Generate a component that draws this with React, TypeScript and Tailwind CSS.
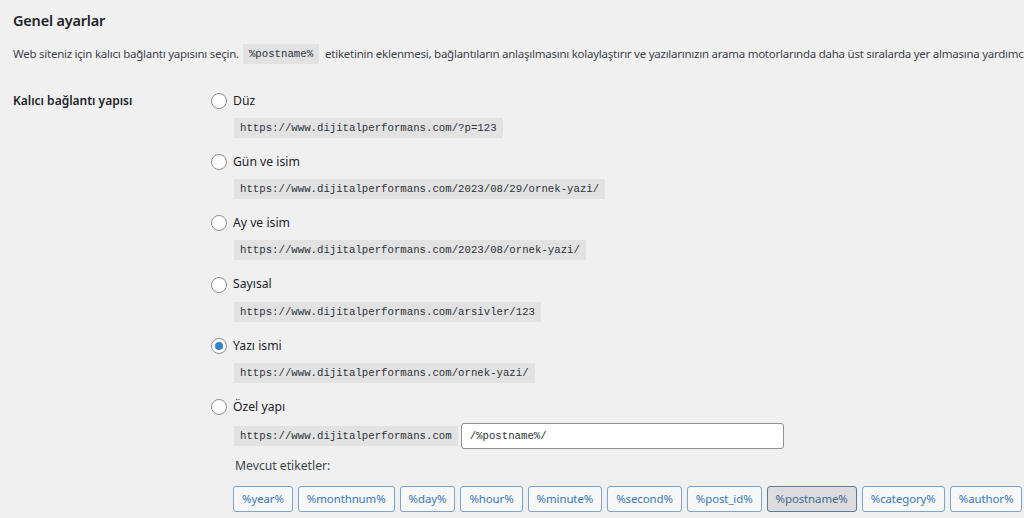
const FONT = "font-['Segoe_UI','Noto_Sans',sans-serif]";

const options = [
  { label: "Düz", url: "https://www.dijitalperformans.com/?p=123" },
  { label: "Gün ve isim", url: "https://www.dijitalperformans.com/2023/08/29/ornek-yazi/" },
  { label: "Ay ve isim", url: "https://www.dijitalperformans.com/2023/08/ornek-yazi/" },
  { label: "Sayısal", url: "https://www.dijitalperformans.com/arsivler/123" },
  { label: "Yazı ismi", url: "https://www.dijitalperformans.com/ornek-yazi/", checked: true },
];

const tags = [
  "%year%",
  "%monthnum%",
  "%day%",
  "%hour%",
  "%minute%",
  "%second%",
  "%post_id%",
  "%postname%",
  "%category%",
  "%author%",
];

function Radio({ checked }: { checked?: boolean }) {
  return (
    <span className="flex h-4 w-4 shrink-0 items-center justify-center rounded-full border border-[#8c8f94] bg-white">
      {checked ? <span className="h-2 w-2 rounded-full bg-[#3582c4]" /> : null}
    </span>
  );
}

function Code({ children }: { children: React.ReactNode }) {
  return (
    <code className="inline-block h-5 bg-[#e2e2e3] px-[6px] font-['Liberation_Mono',monospace] text-[10.7px] leading-5 text-[#2c3338]">
      {children}
    </code>
  );
}

export default function App() {
  return (
    <div className={`h-[518px] w-[1024px] overflow-hidden bg-[#f0f0f1] pl-[13px] text-[#3c434a] ${FONT}`}>
      <h2 className="pt-[10px] text-[14.5px] font-semibold leading-5 tracking-[-0.2px] text-[#1d2327]">Genel ayarlar</h2>

      <p className="mt-[13px] flex items-center whitespace-nowrap text-[11.5px] leading-5 tracking-[-0.25px]">
        Web siteniz için kalıcı bağlantı yapısını seçin.
        <span className="ml-[4px] mr-[6px] tracking-normal">
          <Code>%postname%</Code>
        </span>
        etiketinin eklenmesi, bağlantıların anlaşılmasını kolaylaştırır ve yazılarınızın arama motorlarında daha üst sıralarda yer almasına yardımcı olabilir.
      </p>

      <div className="mt-[27px] flex">
        <div className="w-[198px] shrink-0 text-[12px] font-semibold leading-5 text-[#1d2327]">
          Kalıcı bağlantı yapısı
        </div>

        <div className="flex flex-col">
          {options.map((o) => (
            <div key={o.label} className="flex h-[61.2px] flex-col">
              <label className="flex h-5 items-center gap-[6px] text-[12.2px] text-[#1d2327]">
                <Radio checked={o.checked} />
                {o.label}
              </label>
              <div className="mt-[2px] pl-[23px]">
                <Code>{o.url}</Code>
              </div>
            </div>
          ))}

          <div className="flex flex-col">
            <label className="flex h-5 items-center gap-[6px] text-[12.2px] text-[#1d2327]">
              <Radio />
              Özel yapı
            </label>
            <div className="mt-[6px] flex items-center gap-[3px] pl-[23px]">
              <Code>https://www.dijitalperformans.com</Code>
              <input
                readOnly
                value="/%postname%/"
                className="h-[26px] w-[323px] rounded-[3px] border border-[#8c8f94] bg-white px-[8px] font-['Liberation_Mono',monospace] text-[10.7px] text-[#2c3338] outline-none"
              />
            </div>
            <div className="mt-[7px] pl-[24px] text-[12.2px] leading-5 text-[#3c434a]">Mevcut etiketler:</div>
            <div className="mt-[10px] flex gap-[5px] pl-[22px]">
              {tags.map((t) => (
                <button
                  key={t}
                  className={
                    t === "%postname%"
                      ? "h-[26px] shrink-0 whitespace-nowrap rounded-[3px] border border-[#5b7a99] bg-[#dcdcde] px-[8px] text-[11.45px] tracking-[-0.1px] text-[#43688f]"
                      : "h-[26px] shrink-0 whitespace-nowrap rounded-[3px] border border-[#7ba3cc] bg-[#f6f7f7] px-[8px] text-[11.45px] tracking-[-0.1px] text-[#3a78b5]"
                  }
                >
                  {t}
                </button>
              ))}
            </div>
          </div>
        </div>
      </div>
    </div>
  );
}
